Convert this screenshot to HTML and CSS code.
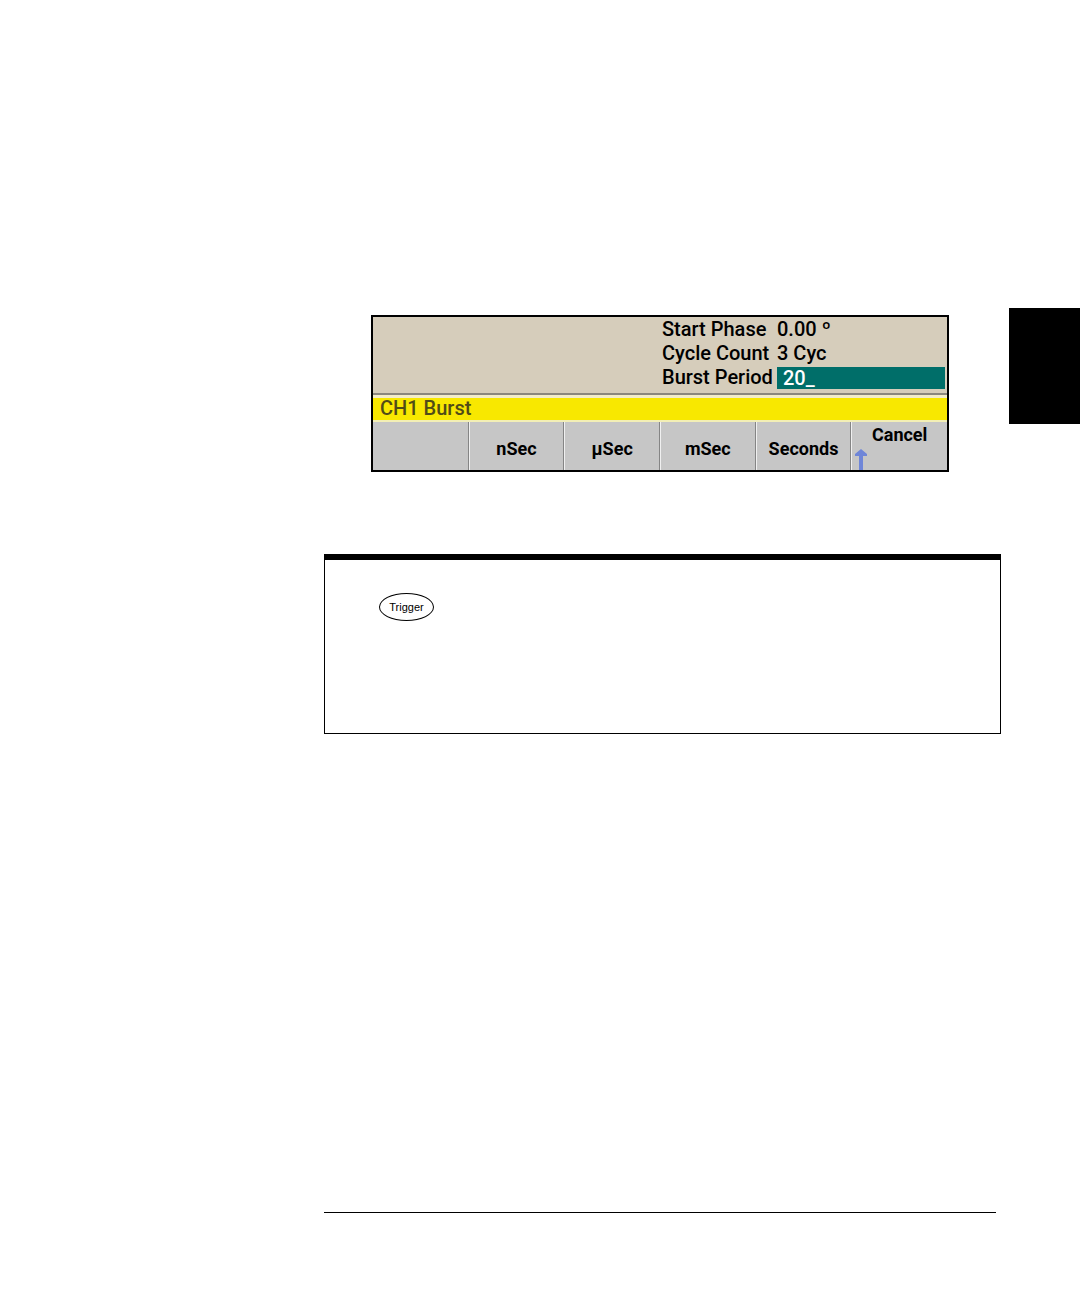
FILE: index.html
```
<!DOCTYPE html>
<html lang="en">
<head>
    <meta charset="UTF-8">
    <meta name="viewport" content="width=device-width, initial-scale=1.0">
    <title>Burst Period</title>
    <link rel="stylesheet" href="styles.css">
</head>
<body>
    <div class="page">
        <main class="content">
            <!-- Instrument display -->
            <form class="screen">
                <div class="readout">
                    <span>Start Phase</span>
                    <span>0.00 º</span>
                    <span>Cycle Count</span>
                    <span>3 Cyc</span>
                    <label for="burstPeriod">Burst Period</label>
                    <input type="text" id="burstPeriod" class="entry" value="20_">
                </div>
                <div class="title-bar">CH1 Burst</div>
                <div class="softkeys">
                    <button type="button" class="softkey" aria-label="Unused softkey"></button>
                    <button type="button" class="softkey">nSec</button>
                    <button type="button" class="softkey">µSec</button>
                    <button type="button" class="softkey">mSec</button>
                    <button type="button" class="softkey">Seconds</button>
                    <button type="button" class="softkey cancel">
                        Cancel
                        <svg class="arrow" width="12" height="21" viewBox="0 0 12 21" aria-hidden="true">
                            <path d="M6 0L12 5V7H8V21H4V7H0V5Z" fill="#6f86d8"/>
                        </svg>
                    </button>
                </div>
            </form>

            <!-- Note box -->
            <section class="note">
                <button type="button" class="trigger">Trigger</button>
            </section>

            <hr class="footer-rule">
        </main>

        <!-- Chapter thumb tab -->
        <aside class="thumb-tab"></aside>
    </div>
</body>
</html>
```

FILE: styles.css
```
* {
    box-sizing: border-box;
}
body {
    margin: 0;
    background-color: #fff;
    color: #000;
    font-family: Roboto, "Liberation Sans", sans-serif;
}
.page {
    display: flex;
    gap: 8px;
    min-height: 100vh;
    padding: 308px 0 83px 30%;
}
.content {
    flex: 1;
    display: flex;
    flex-direction: column;
}
.thumb-tab {
    width: 71px;
    height: 116px;
    background: #000;
}
.screen {
    margin: 7px 52px 0 47px;
    border: 2px solid #000;
    background: #d6cdbb;
}
.readout {
    display: grid;
    grid-template-columns: 115px 168px;
    justify-content: end;
    align-items: center;
    grid-auto-rows: 24px;
    padding: 0 2px 4px 0;
    font-size: 20px;
    font-weight: 500;
    white-space: nowrap;
}
.entry {
    align-self: end;
    width: 100%;
    height: 22px;
    padding: 0 6px;
    border: none;
    border-radius: 0;
    background: #006e69;
    color: #fff;
    font: inherit;
    line-height: 22px;
}
.title-bar {
    padding: 1px 7px 0;
    border-top: 2px solid #8b877d;
    border-bottom: 2px solid #f3efb5;
    box-shadow: inset 0 3px #f3ecc9;
    background: #f8e800;
    color: #504c18;
    font-size: 20px;
    font-weight: 500;
    line-height: 24px;
}
.softkeys {
    display: grid;
    grid-template-columns: repeat(6, 1fr);
    height: 48px;
}
.softkey {
    position: relative;
    min-width: 0;
    padding: 4px 0 0;
    border: none;
    border-left: 1px solid #f0f0f0;
    border-right: 1px solid #858585;
    border-radius: 0;
    background: #c6c6c6;
    color: #000;
    font-family: inherit;
    font-size: 18px;
    font-weight: 700;
    cursor: pointer;
}
.softkey:first-child {
    border-left: none;
}
.softkey:last-child {
    border-right: none;
}
.cancel {
    padding: 0 0 24px;
}
.arrow {
    position: absolute;
    left: 3px;
    bottom: 0;
}
.note {
    height: 180px;
    margin-top: 82px;
    padding: 33px 54px;
    border: 1px solid #000;
    border-top-width: 6px;
}
.trigger {
    display: block;
    width: 55px;
    height: 28px;
    padding: 0;
    border: 1px solid #000;
    border-radius: 50%;
    background: #fff;
    color: #000;
    font-family: "Liberation Sans", Arial, sans-serif;
    font-size: 11px;
    cursor: pointer;
}
.footer-rule {
    width: calc(100% - 5px);
    height: 1px;
    margin: auto 0 0;
    border: none;
    background: #000;
}
```
